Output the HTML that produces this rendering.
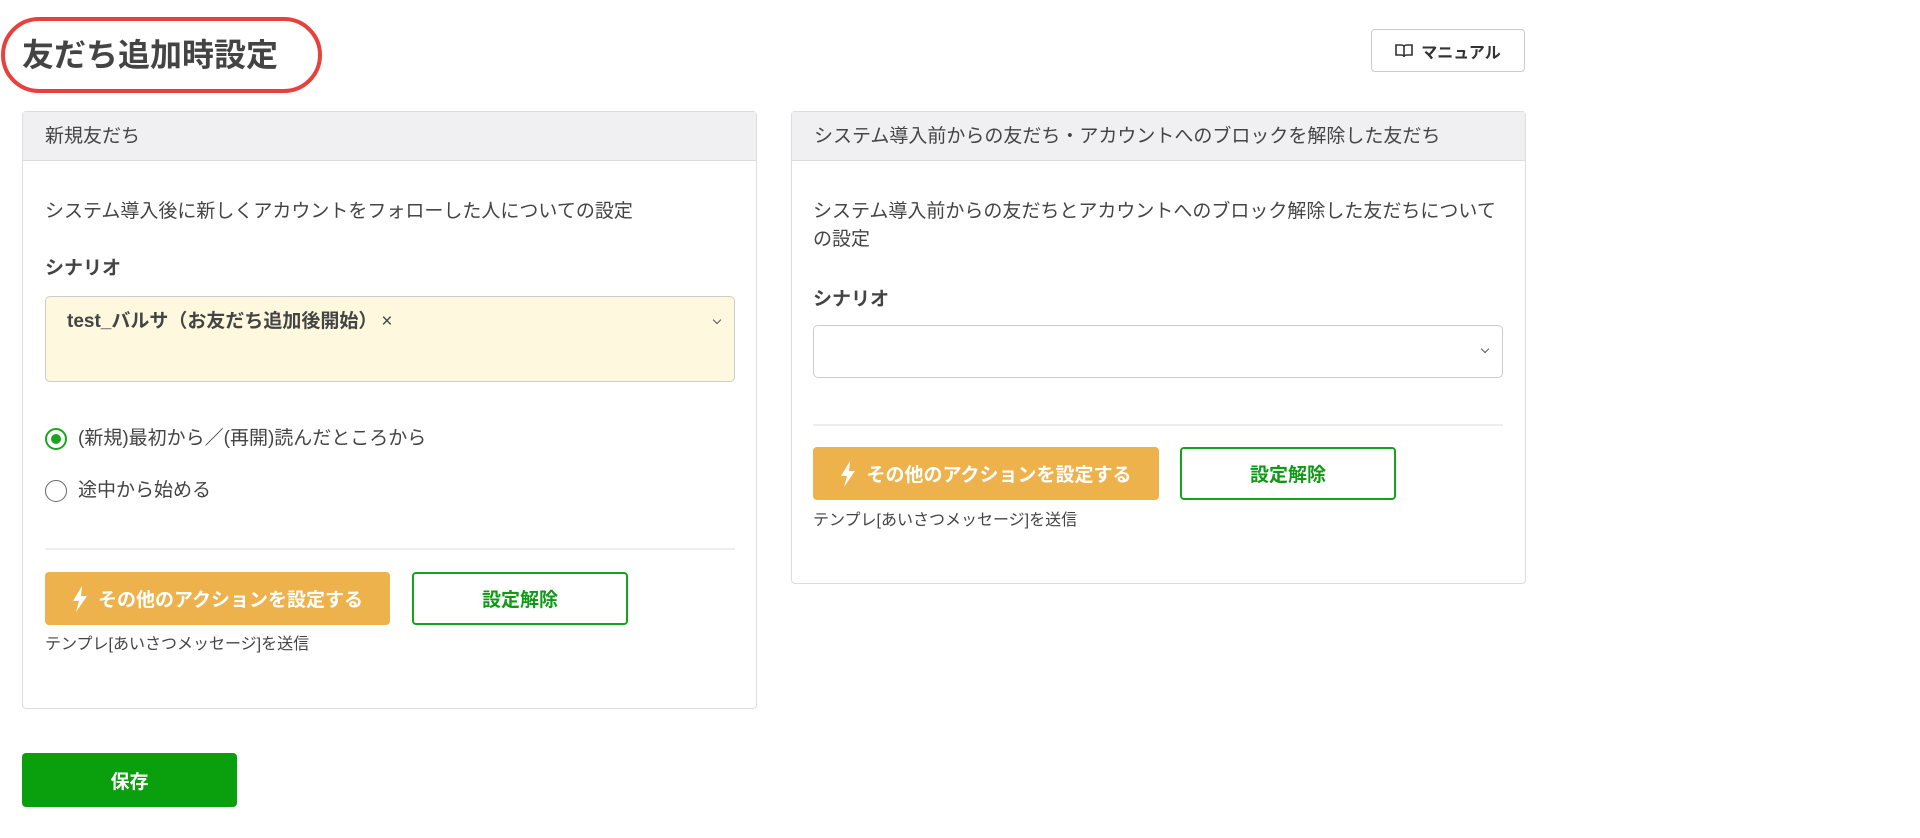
<!DOCTYPE html>
<html><head><meta charset="utf-8"><style>
*{box-sizing:border-box;margin:0;padding:0}
body{width:1920px;height:838px;background:#fff;font-family:"Liberation Sans","Noto Sans CJK JP",sans-serif;color:#3a3a3a;position:relative;overflow:hidden}
.abs{position:absolute}
.ell{left:1px;top:17px;width:321px;height:76px;border:4px solid #e8403a;border-radius:40px}
.title{left:22px;top:33px;font-size:32px;font-weight:bold;color:#444;line-height:44px}
.man{left:1371px;top:29px;width:154px;height:43px;border:1.5px solid #ccc;border-radius:4px;font-size:16px;font-weight:bold;display:flex;align-items:center;justify-content:center;gap:8px;color:#333}
.card{border:1.5px solid #ddd;border-radius:4px;background:#fff}
.hd{position:absolute;left:0;top:0;right:0;height:49px;background:#f0f0f2;border-bottom:1.5px solid #ddd;font-size:19px;padding-left:22px;line-height:49px;color:#444}
.t{position:absolute;font-size:19px;line-height:28px;color:#444;white-space:nowrap}
.b{font-weight:bold}
.sel{position:absolute;border:1.5px solid #ccc;border-radius:5px}
.hr{position:absolute;height:2px;background:#eee}
.ob{position:absolute;height:53px;background:#eeb24c;border-radius:4px;color:#fff;font-weight:bold;font-size:19px;display:flex;align-items:center;justify-content:center;gap:10px}
.gb{position:absolute;height:53px;border:2px solid #16a31c;border-radius:4px;color:#0e9a14;font-weight:bold;font-size:19px;display:flex;align-items:center;justify-content:center}
.sm{position:absolute;font-size:16px;color:#444}
.chev{position:absolute;width:7px;height:7px;border-right:1.5px solid #555;border-bottom:1.5px solid #555;transform:rotate(45deg)}
</style></head><body>
<div class="abs ell"></div>
<div class="abs title">友だち追加時設定</div>
<div class="abs man"><svg width="18" height="16" viewBox="0 0 18 16"><path d="M1 2h5c2 0 3 1 3 2v10c0-1-1-2-3-2H1zM17 2h-5c-2 0-3 1-3 2v10c0-1 1-2 3-2h5z" fill="none" stroke="#333" stroke-width="1.6"/></svg>マニュアル</div>

<div class="abs card" style="left:22px;top:111px;width:735px;height:598px">
<div class="hd">新規友だち</div>
<div class="t" style="left:22px;top:86px">システム導入後に新しくアカウントをフォローした人についての設定</div>
<div class="t b" style="left:22px;top:143px">シナリオ</div>
<div class="sel" style="left:22px;top:184px;width:690px;height:86px;background:#fef8df">
<div class="t b" style="left:21px;top:11px">test_バルサ（お友だち追加後開始）<span style="font-weight:normal;margin-left:4px">×</span></div>
<div class="chev" style="right:14px;top:20px;width:6px;height:6px"></div></div>
<div class="abs" style="left:22px;top:316px;width:22px;height:22px;border:2px solid #1aa51f;border-radius:50%"><div style="position:absolute;left:4px;top:4px;width:10px;height:10px;border-radius:50%;background:#1aa51f"></div></div>
<div class="t" style="left:55px;top:313px">(新規)最初から／(再開)読んだところから</div>
<div class="abs" style="left:22px;top:368px;width:22px;height:22px;border:1.5px solid #666;border-radius:50%"></div>
<div class="t" style="left:55px;top:365px">途中から始める</div>
<div class="hr" style="left:22px;top:436px;width:690px"></div>
<div class="ob" style="left:22px;top:460px;width:345px"><svg width="16" height="26" viewBox="0 0 16 26"><path d="M10 0L1 15h6l-3 11 11-16H9z" fill="#fff"/></svg>その他のアクションを設定する</div>
<div class="gb" style="left:389px;top:460px;width:216px">設定解除</div>
<div class="sm" style="left:22px;top:518px">テンプレ[あいさつメッセージ]を送信</div>
</div>

<div class="abs card" style="left:791px;top:111px;width:735px;height:473px">
<div class="hd">システム導入前からの友だち・アカウントへのブロックを解除した友だち</div>
<div class="t" style="left:21px;top:86px">システム導入前からの友だちとアカウントへのブロック解除した友だちについて</div>
<div class="t" style="left:21px;top:114px">の設定</div>
<div class="t b" style="left:21px;top:174px">シナリオ</div>
<div class="sel" style="left:21px;top:213px;width:690px;height:53px;background:#fff"><div class="chev" style="right:14px;top:20px;width:6px;height:6px"></div></div>
<div class="hr" style="left:21px;top:312px;width:690px"></div>
<div class="ob" style="left:21px;top:335px;width:346px"><svg width="16" height="26" viewBox="0 0 16 26"><path d="M10 0L1 15h6l-3 11 11-16H9z" fill="#fff"/></svg>その他のアクションを設定する</div>
<div class="gb" style="left:388px;top:335px;width:216px">設定解除</div>
<div class="sm" style="left:21px;top:394px">テンプレ[あいさつメッセージ]を送信</div>
</div>

<div class="abs" style="left:22px;top:753px;width:215px;height:54px;background:#0a9f0c;border-radius:4px;color:#fff;font-weight:bold;font-size:19px;display:flex;align-items:center;justify-content:center">保存</div>
</body></html>
